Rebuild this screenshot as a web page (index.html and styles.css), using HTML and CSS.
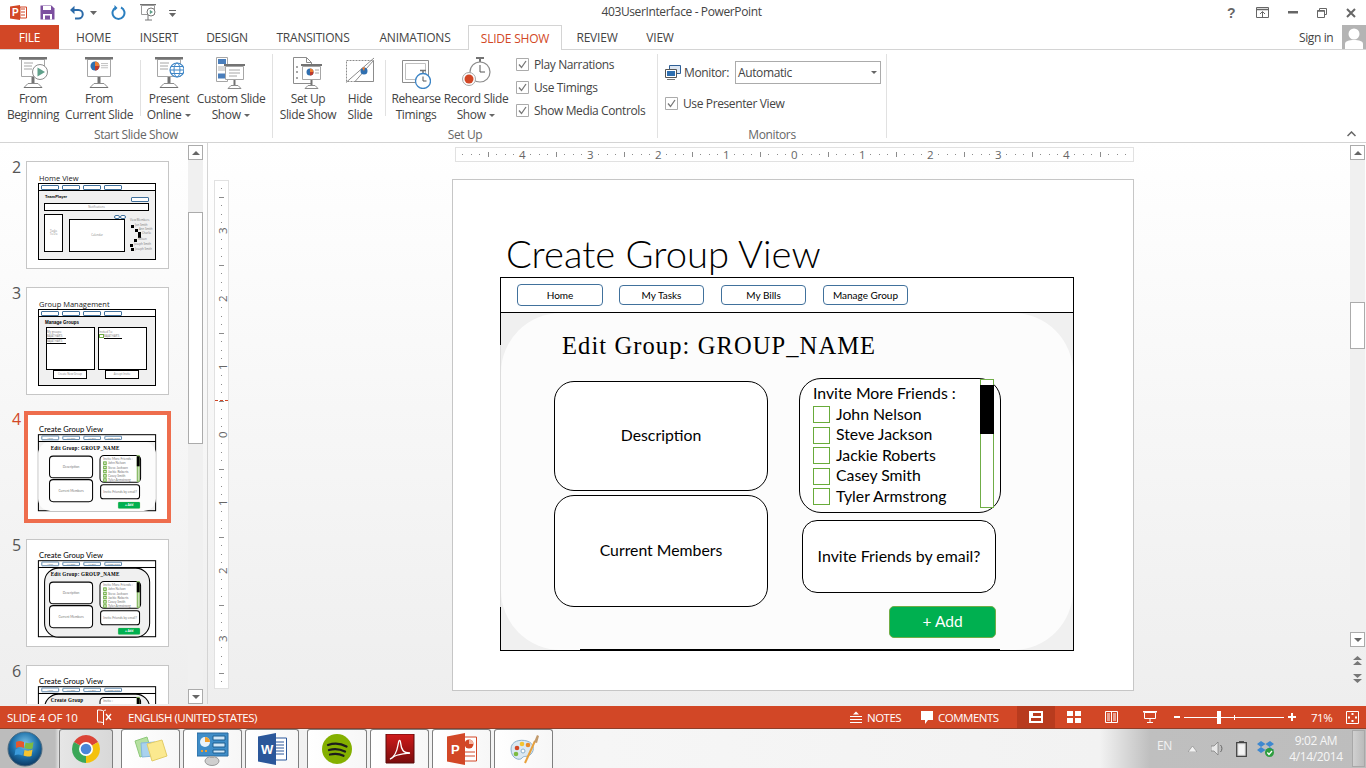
FILE: index.html
```html
<!DOCTYPE html>
<html lang="en">
<head>
<meta charset="utf-8">
<title>403UserInterface - PowerPoint</title>
<link rel="stylesheet" href="styles.css">
</head>
<body>
<svg class="defs" aria-hidden="true">
  <symbol id="proj" viewBox="0 0 30 32">
    <path d="M3.5 2.5h23v17h-23z" fill="#fff" stroke="#a6a6a6"/>
    <path d="M1 0h28v2.5H1z" fill="#737373"/>
    <path d="M13.5 20h3v6h-3z" fill="#737373"/>
    <path d="M10 26.5h10l4 4H6z" fill="#fff" stroke="#8c8c8c"/>
    <path d="M6 30.500h18" stroke="#737373"/>
  </symbol>
  <symbol id="lines" viewBox="0 0 10 10">
    <path d="M0 1.500h10M0 4.500h10M0 7.500h10" stroke="#a6a6a6"/>
  </symbol>
</svg>

<header class="titlebar">
  <div class="qat">
    <svg class="q-ppt" width="17" height="15" viewBox="0 0 17 15"><path d="M0 1.500 10 0v15L0 13.500z" fill="#d24726"/><path d="M10 2h6.500v11H10z" fill="#fff" stroke="#d24726"/><path d="M11 4h4M11 7h4M11 10h4" stroke="#d24726"/><text x="2" y="11" class="q-p">P</text></svg>
    <svg class="q-save" width="15" height="15" viewBox="0 0 15 15"><path d="M.5.500h11l3 3v11H.5z" fill="#7c4f9f"/><path d="M3 1h8v4H3z" fill="#fff"/><path d="M3 9h9v5.500H3z" fill="#fff"/><path d="M5 10.500h5v4H5z" fill="#7c4f9f"/></svg>
    <svg class="q-undo" width="15" height="15" viewBox="0 0 15 15"><path d="M2 5h7.500a4 4 0 0 1 0 8.500H6" fill="none" stroke="#2b6aa8" stroke-width="2"/><path d="M5.500.800 1 5l4.500 4.200z" fill="#2b6aa8"/></svg>
    <svg class="q-caret" width="7" height="4" viewBox="0 0 7 4"><path d="M0 0h7L3.500 4z" fill="#666"/></svg>
    <svg class="q-redo" width="15" height="15" viewBox="0 0 15 15"><path d="M5 2.500a6 6 0 1 0 5 0" fill="none" stroke="#2b7fc0" stroke-width="2"/><path d="M3.500 0v6l3-3z" fill="#2b7fc0"/></svg>
    <svg class="q-show" width="17" height="17" viewBox="0 0 17 17"><path d="M0 .500h16" stroke="#737373" stroke-width="1.500"/><path d="M1.500 1.500h13v9h-13z" fill="#fff" stroke="#999"/><circle cx="11" cy="8" r="4" fill="#fff" stroke="#777"/><path d="M9.800 5.800 13 8l-3.200 2.200z" fill="#5fa08a"/><path d="M5 16h7M8 11v5" stroke="#777"/></svg>
    <svg class="q-more" width="7" height="8" viewBox="0 0 7 8"><path d="M0 1.500h7" stroke="#666"/><path d="M0 4h7L3.500 8z" fill="#666"/></svg>
  </div>
  <div class="doc-title">403UserInterface - PowerPoint</div>
  <div class="winctl">
    <span class="help">?</span>
    <svg class="wc" width="13" height="11" viewBox="0 0 13 11"><path d="M.5.500h12v10H.5z" fill="none" stroke="#666"/><path d="M.5 2.500h12" stroke="#666" stroke-width="1.500"/><path d="M6.500 10V5M4 7l2.500-2.500L9 7" fill="none" stroke="#666"/></svg>
    <svg class="wc" width="10" height="3" viewBox="0 0 10 3"><path d="M0 0h10v2.500H0z" fill="#666"/></svg>
    <svg class="wc" width="10" height="10" viewBox="0 0 10 10"><path d="M2.500 2V.500h7v6H8" fill="none" stroke="#666"/><path d="M.5 2.500h7v7h-7z" fill="#fff" stroke="#666"/><path d="M.5 3h7" stroke="#666" stroke-width="1.500"/></svg>
    <svg class="wc" width="10" height="10" viewBox="0 0 10 10"><path d="M1 1l8 8M9 1l-8 8" stroke="#666" stroke-width="2"/></svg>
  </div>
</header>

<nav class="tabs">
  <span class="tab file">FILE</span>
  <span class="tab">HOME</span>
  <span class="tab">INSERT</span>
  <span class="tab">DESIGN</span>
  <span class="tab">TRANSITIONS</span>
  <span class="tab">ANIMATIONS</span>
  <span class="tab active">SLIDE SHOW</span>
  <span class="tab">REVIEW</span>
  <span class="tab">VIEW</span>
  <span class="signin">Sign in</span>
  <svg class="avatar" width="24" height="24" viewBox="0 0 24 24"><path d="M0 0h24v24H0z" fill="#b4b4b4"/><circle cx="12" cy="9" r="5.500" fill="#fff"/><path d="M3 24v-5c0-3 4-4 9-4s9 1 9 4v5z" fill="#fff"/></svg>
</nav>

<section class="ribbon">
  <div class="group g-start">
    <div class="group-body">
      <div class="rbtn w66">
        <svg class="ic" width="30" height="32" viewBox="0 0 30 32"><use href="#proj"/><path d="M6 6h9M6 9h8M6 12h8" stroke="#a6a6a6"/><circle cx="22" cy="15" r="7.500" fill="#fff" stroke="#8c8c8c"/><path d="M19.500 10.500 27 15l-7.500 4.500z" fill="#5fa08a"/></svg>
        <span>From<br>Beginning</span>
      </div>
      <div class="rbtn w66">
        <svg class="ic" width="30" height="32" viewBox="0 0 30 32"><use href="#proj"/><circle cx="11" cy="9" r="4.500" fill="#2f6fb0"/><path d="M11 9V4.500A4.500 4.500 0 0 1 15.500 9z" fill="#ed7d31"/><path d="M11 9h4.500A4.500 4.500 0 0 1 11 13.500z" fill="#c0392b"/><use href="#lines" x="17" y="5" width="7" height="8"/></svg>
        <span>From<br>Current Slide</span>
      </div>
      <i class="sep s-a"></i>
      <div class="rbtn w52">
        <svg class="ic" width="30" height="32" viewBox="0 0 30 32"><use href="#proj"/><path d="M6 6h9M6 9h8M6 12h8" stroke="#a6a6a6"/><circle cx="23" cy="13" r="7" fill="#fff" stroke="#3d85c6" stroke-width="1.200"/><ellipse cx="23" cy="13" rx="3" ry="7" fill="none" stroke="#3d85c6"/><path d="M16 13h14M17 9.500h12M17 16.500h12" stroke="#3d85c6"/></svg>
        <span>Present<br>Online <b class="car"></b></span>
      </div>
      <div class="rbtn w72">
        <svg class="ic" width="30" height="32" viewBox="0 0 30 32"><path d="M.5.500h11v24H.5z" fill="#fff" stroke="#a6a6a6"/><path d="M2 2h8v5H2zM2 16.500h8v5H2z" fill="#4a7ebb"/><path d="M2 9h8v5H2z" fill="#d9d9d9"/><path d="M9.500 9.500h18v13h-18z" fill="#fff" stroke="#a6a6a6"/><path d="M8 7h21v2H8z" fill="#737373"/><path d="M13 13h11M13 16h11M13 19h8" stroke="#a6a6a6"/><path d="M17.500 23h2v5h-2z" fill="#737373"/><path d="M15 28.500h7l3 3H12z" fill="#fff" stroke="#8c8c8c"/></svg>
        <span>Custom Slide<br>Show <b class="car"></b></span>
      </div>
    </div>
    <div class="group-label">Start Slide Show</div>
  </div>

  <div class="group g-setup">
    <div class="group-body">
      <div class="rbtn w66 ml2">
        <svg class="ic" width="30" height="32" viewBox="0 0 30 32"><path d="M.5.500h13l5 5v21H.5z" fill="#fff" stroke="#8c8c8c"/><path d="M13.500.500v5h5" fill="none" stroke="#8c8c8c"/><path d="M3 9h2v2H3zM3 14h2v2H3zM3 20h2v2H3z" fill="#a6a6a6"/><path d="M9.500 9.500h18v13h-18z" fill="#fff" stroke="#a6a6a6"/><path d="M8 7h21v2H8z" fill="#737373"/><circle cx="17" cy="15" r="3.500" fill="#2f6fb0"/><path d="M17 15v-3.500a3.500 3.500 0 0 1 3.500 3.500z" fill="#ed7d31"/><path d="M17 15h3.500a3.500 3.500 0 0 1-3.500 3.500z" fill="#c0392b"/><path d="M22 13h4M22 16h4" stroke="#a6a6a6"/><path d="M17.500 23h2v5h-2z" fill="#737373"/><path d="M15 28.500h7l3 3H12z" fill="#fff" stroke="#8c8c8c"/></svg>
        <span>Set Up<br>Slide Show</span>
      </div>
      <div class="rbtn w38">
        <svg class="ic" width="30" height="32" viewBox="0 0 30 32"><path d="M1.500 3.500h27v21h-27z" fill="#fff" stroke="#8c8c8c" stroke-dasharray="2 1"/><path d="M10 24.500 28.500 3.500v21z" fill="#fff" stroke="#8c8c8c"/><path d="M1 25.500 29 1" stroke="#8c8c8c"/><circle cx="19" cy="14" r="3.500" fill="#2f6fb0"/><path d="M19 14l-2-3a3.500 3.500 0 0 1 3-.5z" fill="#ed7d31"/></svg>
        <span>Hide<br>Slide</span>
      </div>
      <i class="sep s-b"></i>
      <div class="rbtn w52">
        <svg class="ic" width="30" height="32" viewBox="0 0 30 32"><path d="M1.500 3.500h26v22h-26z" fill="#fff" stroke="#8c8c8c"/><path d="M4.500 6.500h20v16h-20z" fill="#fff" stroke="#bfbfbf"/><path d="M19 13.500h6M22 13.500v3" stroke="#737373" stroke-width="1.500"/><circle cx="22" cy="24" r="7.500" fill="#fff" stroke="#3d85c6" stroke-width="1.300"/><path d="M22 19.500V24h3.500" fill="none" stroke="#555"/></svg>
        <span>Rehearse<br>Timings</span>
      </div>
      <div class="rbtn w64 ml2">
        <svg class="ic" width="30" height="32" viewBox="0 0 30 32"><path d="M15 1h8M19 1v4" stroke="#737373" stroke-width="2"/><circle cx="19" cy="15" r="10" fill="#fff" stroke="#8c8c8c" stroke-width="1.200"/><path d="M19 8v7h5" fill="none" stroke="#555"/><circle cx="8" cy="22" r="6.500" fill="#fff" stroke="#a6a6a6"/><circle cx="8" cy="22" r="4.500" fill="#d24726"/></svg>
        <span>Record Slide<br>Show <b class="car"></b></span>
      </div>
      <div class="checks">
        <label class="chk"><svg class="box" width="13" height="13" viewBox="0 0 13 13"><path d="M.5.500h12v12H.5z" fill="#fff" stroke="#ababab"/><path d="M3 6.500l2.500 3L10 3" fill="none" stroke="#777" stroke-width="1.300"/></svg>Play Narrations</label>
        <label class="chk"><svg class="box" width="13" height="13" viewBox="0 0 13 13"><path d="M.5.500h12v12H.5z" fill="#fff" stroke="#ababab"/><path d="M3 6.500l2.500 3L10 3" fill="none" stroke="#777" stroke-width="1.300"/></svg>Use Timings</label>
        <label class="chk"><svg class="box" width="13" height="13" viewBox="0 0 13 13"><path d="M.5.500h12v12H.5z" fill="#fff" stroke="#ababab"/><path d="M3 6.500l2.500 3L10 3" fill="none" stroke="#777" stroke-width="1.300"/></svg>Show Media Controls</label>
      </div>
    </div>
    <div class="group-label">Set Up</div>
  </div>

  <div class="group g-mon">
    <div class="group-body col">
      <div class="mon-row">
        <svg class="mon-ic" width="16" height="15" viewBox="0 0 16 15"><path d="M4.500.500h11v8h-11z" fill="#dce6f2" stroke="#2f5f96"/><path d="M.5 4.500h11v8h-11z" fill="#fff" stroke="#555"/><path d="M2 6h8v5H2z" fill="#2f6fb0"/><path d="M2 14.500h8" stroke="#777"/></svg>
        <span class="mon-l">Monitor:</span>
        <div class="select">Automatic<b class="car sel-car"></b></div>
      </div>
      <label class="chk presenter"><svg class="box" width="13" height="13" viewBox="0 0 13 13"><path d="M.5.500h12v12H.5z" fill="#fff" stroke="#ababab"/><path d="M3 6.500l2.500 3L10 3" fill="none" stroke="#777" stroke-width="1.300"/></svg>Use Presenter View</label>
    </div>
    <div class="group-label">Monitors</div>
  </div>
  <svg class="collapse" width="9" height="6" viewBox="0 0 9 6"><path d="M.5 5 4.500 1l4 4" fill="none" stroke="#666" stroke-width="1.500"/></svg>
</section>

<main class="main">
  <aside class="pane">
    <div class="thumbs">
      <div class="trow">
        <span class="tnum">2</span>
        <div class="thumb">
          <span class="tt">Home View</span>
          <div class="tw"></div>
          <div class="tline t1"></div>
          <i class="tb b1"></i><i class="tb b2"></i><i class="tb b3"></i><i class="tb b4"></i>
          <b class="th1 hv">TeamPlayer</b>
          <i class="tb hv-btn"></i>
          <div class="tbox hv-bar">Notifications</div>
          <div class="tbox hv-left">Tasks To Do</div>
          <div class="tbox hv-mid">Calendar</div>
          <i class="tb hv-r1"></i><i class="tb hv-r2"></i>
          <span class="tiny hv-list">View Members</span>
          <i class="sq q1"></i><i class="sq q2"></i><i class="sq q3"></i><i class="sq q4"></i><i class="sq q5"></i><i class="sq q6"></i>
          <span class="tiny l1">Jon Smith</span><span class="tiny l2">Ann Smith</span><span class="tiny l3">Charlie</span><span class="tiny l4">Wilson</span><span class="tiny l5">Joseph Smith</span><span class="tiny l6">Joseph Smith</span>
        </div>
      </div>
      <div class="trow">
        <span class="tnum">3</span>
        <div class="thumb">
          <span class="tt">Group Management</span>
          <div class="tw"></div>
          <div class="tline t1"></div>
          <i class="tb b1"></i><i class="tb b2"></i><i class="tb b3"></i><i class="tb b4"></i>
          <b class="th1 mg">Manage Groups</b>
          <div class="tbox mg-a"></div>
          <div class="tbox mg-b"></div>
          <div class="tbox mg-c">Create New Group</div>
          <div class="tbox mg-d">Accept Invite</div>
          <span class="tiny m1">My groups:</span>
          <span class="tiny m2 ul">BAJATHAR'S</span>
          <span class="tiny m3 ul">BAJATHAR'S</span>
          <span class="tiny m4">Invited To:</span>
          <span class="tiny m5 ul">BAJATHAR'S</span>
          <i class="gsq"></i>
        </div>
      </div>
      <div class="trow">
        <span class="tnum sel-num">4</span>
        <div class="thumb sel">
          <div class="mini">
            <h2 class="s-title">Create Group View</h2>
            <div class="wire"></div>
            <div class="panel"></div>
            <div class="navline"></div>
            <div class="nbtn n1">Home</div><div class="nbtn n2">My Tasks</div><div class="nbtn n3">My Bills</div><div class="nbtn n4">Manage Group</div>
            <h3 class="s-head">Edit Group: GROUP_NAME</h3>
            <div class="card c-desc">Description</div>
            <div class="card c-memb">Current Members</div>
            <div class="card c-inv">
              <div class="inv-h">Invite More Friends :</div>
              <div class="fr"><i></i>John Nelson</div><div class="fr"><i></i>Steve Jackson</div><div class="fr"><i></i>Jackie Roberts</div><div class="fr"><i></i>Casey Smith</div><div class="fr"><i></i>Tyler Armstrong</div>
            </div>
            <div class="sb"><i></i></div>
            <div class="card c-mail">Invite Friends by email?</div>
            <div class="add">+ Add</div>
          </div>
        </div>
      </div>
      <div class="trow">
        <span class="tnum">5</span>
        <div class="thumb">
          <div class="mini">
            <h2 class="s-title">Create Group View</h2>
            <div class="wire plain"></div>
            <div class="panel framed"></div>
            <div class="navline"></div>
            <div class="nbtn n1">Home</div><div class="nbtn n2">My Tasks</div><div class="nbtn n3">My Bills</div><div class="nbtn n4">Manage Group</div>
            <h3 class="s-head">Edit Group: GROUP_NAME</h3>
            <div class="card c-desc">Description</div>
            <div class="card c-memb">Current Members</div>
            <div class="card c-inv">
              <div class="inv-h">Invite More Friends :</div>
              <div class="fr"><i></i>John Nelson</div><div class="fr"><i></i>Steve Jackson</div><div class="fr"><i></i>Jackie Roberts</div><div class="fr"><i></i>Casey Smith</div><div class="fr"><i></i>Tyler Armstrong</div>
            </div>
            <div class="sb"><i></i></div>
            <div class="card c-mail">Invite Friends by email?</div>
            <div class="add">+ Add</div>
          </div>
        </div>
      </div>
      <div class="trow">
        <span class="tnum">6</span>
        <div class="thumb">
          <div class="mini">
            <h2 class="s-title">Create Group View</h2>
            <div class="wire plain"></div>
            <div class="panel framed"></div>
            <div class="navline"></div>
            <div class="nbtn n1">Home</div><div class="nbtn n2">My Tasks</div><div class="nbtn n3">My Bills</div><div class="nbtn n4">Manage Group</div>
            <h3 class="s-head">Create Group</h3>
            <div class="card c-inv c-up"><div class="inv-h">Invite :</div></div>
            <div class="sb sb-up"><i></i></div>
          </div>
        </div>
      </div>
    </div>
    <div class="vscroll left">
      <span class="sbtn"><b class="tri up"></b></span>
      <div class="track"><div class="sthumb"></div></div>
      <span class="sbtn"><b class="tri down"></b></span>
    </div>
  </aside>

  <section class="editor">
    <div class="vruler">
      <svg class="r-ticks" width="13" height="507"><defs><pattern id="pv" x="0" y="50" width="13" height="68" patternUnits="userSpaceOnUse"><path d="M6 8h1v1H6zM6 17h1v1H6zM6 25h1v1H6zM4 34h5v1H4zM6 42h1v1H6zM6 51h1v1H6zM6 59h1v1H6z" fill="#8c8c8c"/></pattern></defs><rect width="13" height="507" fill="url(#pv)"/></svg>
      <div class="v-nums"><span>3</span><span>2</span><span>1</span><span>0</span><span>1</span><span>2</span><span>3</span></div>
      <i class="v-mark"></i>
    </div>
    <div class="stage">
      <div class="hruler">
        <svg class="r-ticks" width="677" height="13"><defs><pattern id="ph" x="66" y="0" width="68" height="13" patternUnits="userSpaceOnUse"><path d="M8 6h1v1H8zM17 6h1v1h-1zM25 6h1v1h-1zM34 4h1v5h-1zM42 6h1v1h-1zM51 6h1v1h-1zM59 6h1v1h-1z" fill="#8c8c8c"/></pattern></defs><rect width="677" height="13" fill="url(#ph)"/></svg>
        <div class="h-nums"><span>4</span><span>3</span><span>2</span><span>1</span><span>0</span><span>1</span><span>2</span><span>3</span><span>4</span></div>
      </div>
      <div class="slide">
        <h2 class="s-title">Create Group View</h2>
        <div class="wire"></div>
        <div class="panel"></div>
        <div class="navline"></div>
        <i class="fade-left"></i>
        <i class="thick"></i>
        <div class="nbtn n1">Home</div><div class="nbtn n2">My Tasks</div><div class="nbtn n3">My Bills</div><div class="nbtn n4">Manage Group</div>
        <h3 class="s-head">Edit Group: GROUP_NAME</h3>
        <div class="card c-desc">Description</div>
        <div class="card c-memb">Current Members</div>
        <div class="card c-inv">
          <div class="inv-h">Invite More Friends :</div>
          <div class="fr"><i></i>John Nelson</div><div class="fr"><i></i>Steve Jackson</div><div class="fr"><i></i>Jackie Roberts</div><div class="fr"><i></i>Casey Smith</div><div class="fr"><i></i>Tyler Armstrong</div>
        </div>
        <div class="sb"><i></i></div>
        <div class="card c-mail">Invite Friends by email?</div>
        <div class="add">+ Add</div>
      </div>
    </div>
    <div class="vscroll right">
      <span class="sbtn"><b class="tri up"></b></span>
      <div class="track"><div class="sthumb"></div></div>
      <span class="sbtn"><b class="tri down"></b></span>
      <svg class="pg" width="9" height="9" viewBox="0 0 9 9"><path d="M0 4 4.500 0 9 4zM0 9l4.500-4L9 9z" fill="#777"/></svg>
      <svg class="pg" width="9" height="9" viewBox="0 0 9 9"><path d="M0 0l4.500 4L9 0zM0 5l4.500 4L9 5z" fill="#777"/></svg>
    </div>
  </section>
</main>

<footer class="status">
  <span class="st-slide">SLIDE 4 OF 10</span>
  <svg class="st-book" width="15" height="16" viewBox="0 0 15 16"><path d="M6.500 2C5 1 3 1 .5 1v12c2.500 0 4.500 0 6 1V2z" fill="none" stroke="#fff"/><path d="M6.500 2c1-.7 1.500-.9 2.500-1M6.500 14v2" stroke="#fff"/><path d="M9 5l5 6M14 5l-5 6" stroke="#fff" stroke-width="1.300"/></svg>
  <span class="st-lang">ENGLISH (UNITED STATES)</span>
  <div class="st-right">
    <svg class="si-notes" width="12" height="12" viewBox="0 0 12 12"><path d="M3 3.500 6 .500l3 3z" fill="#fff"/><path d="M0 5.500h12M0 8.500h12M0 11.500h12" stroke="#fff"/></svg>
    <span class="st-notes">NOTES</span>
    <svg class="si-com" width="12" height="13" viewBox="0 0 12 13"><path d="M0 0h12v9H7l-3 4V9H0z" fill="#fff"/></svg>
    <span class="st-comments">COMMENTS</span>
    <span class="view-on"><svg width="14" height="12" viewBox="0 0 14 12"><path d="M0 0h14v12H0z" fill="#fff"/><path d="M4 2h8v3H4zM2 7h10v3H2z" fill="#b83b1e"/></svg></span>
    <svg class="si-sort" width="14" height="12" viewBox="0 0 14 12"><path d="M0 0h6v5H0zM8 0h6v5H8zM0 7h6v5H0zM8 7h6v5H8z" fill="#fff"/></svg>
    <svg class="si-read" width="13" height="12" viewBox="0 0 13 12"><path d="M.5.500h12v11H.5z" fill="none" stroke="#fff"/><path d="M6.500 0v12M2 3h3M2 5h3M2 7h3M2 9h3M8 3h3M8 5h3M8 7h3M8 9h3" stroke="#fff"/></svg>
    <svg class="si-show" width="14" height="12" viewBox="0 0 14 12"><path d="M0 0h14v1.500H0z" fill="#fff"/><path d="M1.500 1.500h11v6h-11z" fill="none" stroke="#fff"/><path d="M7 8v3M4 11.500h6" stroke="#fff"/></svg>
    <b class="z-m"></b>
    <div class="slider"><i class="z-tick"></i><i class="z-th"></i></div>
    <b class="z-p"></b>
    <span class="st-zoom">71%</span>
    <svg class="si-fit" width="13" height="13" viewBox="0 0 13 13"><path d="M.5.500h12v12H.5z" fill="none" stroke="#fff"/><path d="M6.500 2v2M6.500 9v2M2 6.500h2M9 6.500h2M5 3h3M5 10h3M3 5v3M10 5v3" stroke="#fff"/></svg>
  </div>
</footer>

<div class="taskbar">
  <div class="start">
    <svg width="36" height="36" viewBox="0 0 36 36"><defs><radialGradient id="orb" cx=".5" cy=".35" r=".7"><stop offset="0" stop-color="#7cc4e8"/><stop offset=".55" stop-color="#1a6ea8"/><stop offset="1" stop-color="#0c2f55"/></radialGradient></defs><circle cx="18" cy="18" r="17" fill="url(#orb)" stroke="#4d6b80"/><path d="M9 11c3-1.500 5-1 8 0v6c-3-1-5-1.500-8 0z" fill="#e4572e"/><path d="M18.500 11.500c3 1 5 1 8-.5l-1 6.500c-3 1-5 .5-8-.5z" fill="#7dbb42"/><path d="M8.500 18.500c3-1.500 5-1 8 0l-1 6c-3-1-5-1.500-8 0z" fill="#3b9bdc"/><path d="M17.500 19c3 1 5 1 8-.5l-1 6.500c-3 1-5 .5-8-.5z" fill="#f4c430"/></svg>
  </div>
  <div class="tk w54 pressed">
    <svg width="28" height="28" viewBox="0 0 28 28"><path d="M1.900 7A14 14 0 0 1 26.100 7L14 14z" fill="#db4437"/><path d="M26.100 7A14 14 0 0 1 14 28L14 14z" fill="#f4c20d"/><path d="M14 28A14 14 0 0 1 1.900 7L14 14z" fill="#3aa757"/><circle cx="14" cy="14" r="7" fill="#fff"/><circle cx="14" cy="14" r="5.300" fill="#4a86d8"/></svg>
  </div>
  <div class="tk w59 gap8">
    <svg width="34" height="28" viewBox="0 0 34 28"><path d="M1 6 13 2l5 16-12 4z" fill="#b5e0a0" stroke="#8ec97a"/><path d="M7 8l14-1v14L8 22z" fill="#a9d2ee" stroke="#86b8dc"/><path d="M13 9l15-4 5 16-15 5z" fill="#fbe98f" stroke="#e3cc66"/></svg>
  </div>
  <div class="tk w59">
    <svg width="32" height="34" viewBox="0 0 32 34"><path d="M0 1h31v23H0z" fill="#3f8dc8" stroke="#2a6a9e"/><path d="M16 4h12v4H16zM16 11h12v4H16zM16 18h12v3H16z" fill="#cfe6f7" stroke="#1f5f90"/><circle cx="8" cy="10" r="5" fill="#e9f3fa"/><path d="M8 10V5a5 5 0 0 1 5 5z" fill="#f0a030"/><path d="M4 18h2v2H4zM8 18h2v2H8z" fill="#f0a030"/><ellipse cx="15" cy="29" rx="7" ry="4.500" fill="#cfcfcf" stroke="#999"/><path d="M13 24h4v2h-4z" fill="#aaa"/></svg>
  </div>
  <div class="tk w54">
    <svg width="29" height="32" viewBox="0 0 29 32"><path d="M10 5h18.500v22H10z" fill="#fff" stroke="#2b579a"/><path d="M17 9h9M17 12h9M17 15h9M17 18h9M17 21h9" stroke="#2b579a"/><path d="M0 3.500 18 0v32L0 28.500z" fill="#2b579a"/><text x="3" y="21" class="tk-l">W</text></svg>
  </div>
  <div class="tk w60 gap8">
    <svg width="30" height="30" viewBox="0 0 30 30"><circle cx="15" cy="15" r="15" fill="#84b000"/><path d="M6 11c6-2 13-1.500 18.500 1.500M7 16c5-1.500 11-1 16 1.500M8 20.500c4.500-1 9.500-.8 13.500 1.300" fill="none" stroke="#1d1d1d" stroke-width="2.300" stroke-linecap="round"/></svg>
  </div>
  <div class="tk w59">
    <svg width="30" height="30" viewBox="0 0 30 30"><defs><linearGradient id="acro" x1="0" y1="0" x2="0" y2="1"><stop offset="0" stop-color="#d01a1a"/><stop offset="1" stop-color="#7a0d0d"/></linearGradient></defs><path d="M1 0h28v29H1z" fill="url(#acro)" stroke="#5a0b0b"/><path d="M5 25c4-2 7-8 8-14 .5-3 1-5 2-4.500s0 6 3 10c1.500 2 5 2.500 7 2.500-3 .5-11 1-15 3-2 1-4 3-5 3z" fill="none" stroke="#fff" stroke-width="1.300"/></svg>
  </div>
  <div class="tk w59">
    <svg width="30" height="32" viewBox="0 0 30 32"><path d="M10 4h19.500v24H10z" fill="#fff" stroke="#d24726"/><circle cx="22" cy="11" r="4.500" fill="#d24726"/><path d="M22 11V6.500a4.500 4.500 0 0 1 4.500 4.500z" fill="#f5b39f"/><path d="M18 19h10M18 23h10" stroke="#d24726"/><path d="M0 3.500 18 0v32L0 28.500z" fill="#d24726"/><text x="4" y="21" class="tk-l">P</text></svg>
  </div>
  <div class="tk w59">
    <svg width="32" height="32" viewBox="0 0 32 32"><path d="M3 16C3 8 12 6 19 8s8 9 4 13-7 1-9 4-11 1-11-9z" fill="#dbe8f2" stroke="#8cb0cc"/><circle cx="9" cy="15" r="2.300" fill="#d24726"/><circle cx="14" cy="11" r="2.300" fill="#f4c430"/><circle cx="20" cy="12" r="2.300" fill="#e88a2a"/><circle cx="8" cy="21" r="2.300" fill="#7dbb42"/><circle cx="15" cy="18" r="2" fill="#fff" stroke="#8cb0cc"/><path d="M17 30 27 8" stroke="#e8a13c" stroke-width="2"/><path d="M26 9l3-7 2 1-2 7z" fill="#c29a6b"/></svg>
  </div>
  <div class="tray">
    <span class="tr-en">EN</span>
    <svg class="tr-up" width="9" height="6" viewBox="0 0 9 6"><path d="M0 6 4.500 0 9 6z" fill="#f2f2f2" stroke="#777" stroke-width=".5"/></svg>
    <svg class="tr-sp" width="13" height="15" viewBox="0 0 13 15"><path d="M0 5h3l4-4v13l-4-4H0z" fill="#e8e8e8" stroke="#777" stroke-width=".7"/><path d="M9.500 4a5 5 0 0 1 0 7" fill="none" stroke="#666"/></svg>
    <svg class="tr-bat" width="11" height="16" viewBox="0 0 11 16"><path d="M3 0h5v2H3z" fill="#555"/><path d="M.7 1.700h9.600v13.600H.7z" fill="#ddd" stroke="#444" stroke-width="1.300"/><path d="M2.500 3.500h6v10h-6z" fill="#f4f4f4"/></svg>
    <svg class="tr-db" width="17" height="17" viewBox="0 0 17 17"><path d="M4 1 8.500 4 4 7 0 4zM13 1l4 3-4.500 3-4-3zM4 7l4.500 3L4 13 0 10zM13 7l4 3-4.500 3-4-3z" fill="#3d88d0"/><circle cx="12.500" cy="12.500" r="4.500" fill="#2e9e3f"/><path d="M10.300 12.500l1.700 2 3-3.500" fill="none" stroke="#fff" stroke-width="1.300"/></svg>
    <div class="clock"><span>9:02 AM</span><span>4/14/2014</span></div>
    <i class="desk"></i>
  </div>
</div>
</body>
</html>
```

FILE: styles.css
```css
* { box-sizing: border-box; }
html, body { margin: 0; padding: 0; }
body {
  width: 1366px; height: 768px; overflow: hidden; background: #fff;
  font-family: "Open Sans", "Noto Sans", sans-serif; font-size: 12px; color: #444;
  letter-spacing: -.38px; display: flex; flex-direction: column;
}
.defs { position: absolute; width: 0; height: 0; }
svg { display: block; flex: none; }

/* title bar */
.titlebar { height: 25px; display: flex; align-items: center; position: relative; flex: none; }
.qat { display: flex; align-items: center; padding-left: 10px; }
.q-p { font: bold 10px "Liberation Sans", sans-serif; fill: #fff; }
.q-save { margin-left: 13px; }
.q-undo { margin-left: 14px; }
.q-caret { margin-left: 6px; }
.q-redo { margin-left: 14px; }
.q-show { margin-left: 14px; }
.q-more { margin-left: 12px; }
.doc-title { position: absolute; left: 0; width: 1363px; text-align: center; top: 3px; line-height: 18px; pointer-events: none; }
.winctl { margin-left: auto; display: flex; align-items: center; padding-right: 10px; }
.help { width: 12px; font: bold 14px "Liberation Sans", sans-serif; color: #666; text-align: center; }
.wc { margin-left: 19px; }

/* tabs */
.tabs {
  height: 25px; flex: none; display: grid; align-items: stretch; border-bottom: 1px solid #d4d4d4;
  grid-template-columns: 59px 69px 62px 74px 98px 106px 94px 70px 56px 1fr 36px 7px 24px;
}
.tab { display: flex; align-items: center; justify-content: center; height: 24px; letter-spacing: -.22px; }
.tab.file { background: #d24726; color: #fff; }
.tab.active { color: #d24726; background: #fff; height: 25px; border: 1px solid #d4d4d4; border-bottom: 0; }
.signin { grid-column: 11; display: flex; align-items: center; white-space: nowrap; height: 24px; }
.avatar { grid-column: 13; height: 24px; }

/* ribbon */
.ribbon { height: 93px; flex: none; display: flex; border-bottom: 1px solid #d4d4d4; padding-top: 4px; position: relative; }
.group { height: 84px; display: flex; flex-direction: column; border-right: 1px solid #e1e1e1; }
.g-start { width: 273px; }
.g-setup { width: 385px; }
.g-mon { width: 229px; }
.group-body { flex: 1; display: flex; min-height: 0; }
.group-body.col { flex-direction: column; padding-left: 7px; }
.group-label { height: 16px; margin-bottom: -5px; line-height: 16px; text-align: center; color: #666; white-space: nowrap; }
.rbtn { display: flex; flex-direction: column; align-items: center; padding-top: 3px; line-height: 16px; text-align: center; white-space: nowrap; }
.rbtn .ic { margin-bottom: 2px; }
.w66 { width: 66px; } .w52 { width: 52px; } .w72 { width: 72px; } .w38 { width: 38px; } .w64 { width: 64px; }
.ml2 { margin-left: 2px; }
.sep { width: 1px; height: 56px; background: #e1e1e1; margin-top: 6px; flex: none; }
.s-a { margin: 6px 2px 0 8px; }
.s-b { margin: 6px 4px 0 6px; }
.car { display: inline-block; width: 0; height: 0; border: 3px solid transparent; border-top: 3px solid #666; border-bottom: 0; vertical-align: middle; margin-left: 1px; }
.checks { margin-left: 8px; margin-top: -1px; display: flex; flex-direction: column; gap: 1px; }
.chk { height: 22px; display: flex; align-items: center; gap: 5px; white-space: nowrap; }
.mon-row { display: flex; align-items: center; margin-top: 7px; height: 23px; }
.mon-l { margin-left: 3px; width: 51px; }
.select { width: 146px; height: 23px; border: 1px solid #ababab; padding-left: 2px; line-height: 21px; position: relative; }
.sel-car { position: absolute; right: 3px; top: 9px; }
.presenter { margin-top: 8px; }
.collapse { position: absolute; left: 1347px; top: 81px; }

/* main */
.main { height: 563px; flex: none; display: flex; background: linear-gradient(#fff, #eee); overflow: hidden; }
.pane { width: 208px; height: 561px; display: flex; border-right: 1px solid #d4d4d4; flex: none; }
.thumbs { width: 188px; padding-top: 18px; overflow: hidden; height: 561px; }
.trow { display: flex; margin-bottom: 18px; height: 108px; }
.tnum { width: 26px; padding-left: 12px; font-size: 16px; line-height: 12px; color: #555; }
.sel-num { color: #d24726; }
.thumb { width: 143px; height: 108px; position: relative; background: #fff; box-shadow: inset 0 0 0 1px #c6c6c6; overflow: visible; letter-spacing: 0; }
.thumb.sel { box-shadow: 0 0 0 2px #ee6d4d, inset 0 0 0 2px #ee6d4d; }

.vscroll { width: 15px; display: flex; flex-direction: column; flex: none; align-items: center; }
.left.vscroll { margin-top: 2px; height: 559px; }
.right.vscroll { margin: 2px 0 0 216px; height: 559px; }
.sbtn { width: 15px; height: 15px; border: 1px solid #ababab; background: #fff; display: flex; align-items: center; justify-content: center; flex: none; }
.tri { width: 0; height: 0; border: 4px solid transparent; }
.tri.up { border-top: 0; border-bottom: 4px solid #666; }
.tri.down { border-bottom: 0; border-top: 4px solid #666; }
.track { flex: 1; width: 15px; background: #f0f0f0; }
.sthumb { width: 15px; background: #fff; border: 1px solid #ababab; }
.left .sthumb { height: 232px; margin-top: 52px; }
.right .track { flex: none; height: 472px; }
.right .sthumb { height: 47px; margin-top: 142px; }
.pg { margin-top: 9px; }

/* editor */
.editor { flex: 1; display: flex; align-items: flex-start; }
.vruler { width: 15px; height: 509px; margin: 37px 0 0 6px; border: 1px solid #e1e1e1; background: #fff; position: relative; flex: none; }
.r-ticks { position: absolute; left: 0; top: 0; }
.v-nums { position: absolute; left: 0; top: 16px; width: 13px; }
.v-nums span { display: flex; height: 68px; align-items: center; justify-content: center; transform: rotate(-90deg); font-size: 11.500px; color: #666; }
.v-mark { position: absolute; left: 0; top: 219px; width: 13px; border-top: 1px dashed #d24726; }
.stage { width: 682px; margin-left: 223px; flex: none; }
.hruler { width: 679px; height: 15px; margin: 4px 0 0 3px; border: 1px solid #e1e1e1; background: #fff; position: relative; }
.h-nums { position: absolute; left: 32px; top: 0; display: flex; }
.h-nums span { width: 68px; height: 13px; line-height: 13px; text-align: center; font-size: 11.500px; color: #666; }

/* slide canvas */
.slide { width: 682px; height: 512px; margin-top: 17px; background: #fff; position: relative; box-shadow: inset 0 0 0 1px #c6c6c6; letter-spacing: 0; }
.mini { position: absolute; left: 0; top: 0; width: 682px; height: 512px; transform-origin: 0 0; transform: translate(2px, 1px) scale(.206); }
.s-title { position: absolute; left: 54px; top: 48px; margin: 0; font: 300 38.200px/52px Lato, sans-serif; color: #000; white-space: nowrap; }
.wire { position: absolute; left: 48px; top: 98px; width: 574px; height: 374px; border: 1px solid #000; background: linear-gradient(#fff 34px, #f0f0f0 34px); }
.panel { position: absolute; left: 49px; top: 134px; width: 572px; height: 337px; border-radius: 60px; background: #fcfcfc; }
.navline { position: absolute; left: 49px; top: 133px; width: 572px; height: 1px; background: #000; }
.fade-left { position: absolute; left: 48px; top: 166px; width: 1px; height: 262px; background: #ddd; }
.thick { position: absolute; left: 128px; top: 470px; width: 420px; height: 2px; background: #000; }
.nbtn { position: absolute; height: 20px; top: 106px; width: 85px; border: 1px solid #41719c; border-radius: 4px; background: #fff; font: 10px/18px Lato, sans-serif; color: #000; text-align: center; }
.n1 { left: 65px; top: 105px; width: 86px; height: 22px; line-height: 20px; }
.n2 { left: 167px; }
.n3 { left: 269px; }
.n4 { left: 371px; }
.s-head { position: absolute; left: 110px; top: 150px; margin: 0; font: 400 24.500px/34px "Liberation Serif", serif; color: #000; white-space: nowrap; letter-spacing: 1.1px; }
.card { position: absolute; border: 1px solid #000; background: #fff; border-radius: 20px; display: flex; align-items: center; justify-content: center; padding-bottom: 2px; font: 15.800px/20px Lato, sans-serif; color: #000; white-space: nowrap; }
.c-desc { left: 102px; top: 202px; width: 214px; height: 110px; }
.c-memb { left: 102px; top: 316px; width: 214px; height: 112px; }
.c-inv { left: 347px; top: 199px; width: 202px; height: 135px; display: block; padding: 4px 0 0 13px; border-radius: 22px; }
.inv-h { height: 20px; line-height: 20px; }
.fr { display: flex; align-items: center; height: 21px; }
.fr:nth-child(odd) { height: 20px; }
.fr i { width: 17px; height: 17px; border: 1px solid #68ab3a; margin: 2px 6px 0 0; flex: none; }
.sb { position: absolute; left: 528px; top: 200px; width: 14px; height: 129px; border: 1px solid #70ad47; background: #fff; }
.sb i { display: block; height: 49px; margin: 5px -1px 0; background: #000; }
.c-mail { left: 350px; top: 341px; width: 194px; height: 73px; border-radius: 15px; font-size: 15.900px; }
.add { position: absolute; left: 437px; top: 427px; width: 107px; height: 32px; background: #00b050; border: 1px solid #70ad47; border-radius: 5px; color: #fff; font: 15.500px/29px Lato, sans-serif; text-align: center; }

/* mini overrides */
.mini .s-title { font-weight: 400; font-size: 37px; }
.mini .wire { border-width: 5px; background: linear-gradient(#fff 30px, #f0f0f0 30px); }
.mini .wire.plain { background: #fff; }
.mini .navline { height: 5px; top: 131px; }
.mini .nbtn { border-width: 4px; line-height: 12px; color: #777; }
.mini .s-head { font-weight: 700; color: #000; }
.mini .card { border-width: 5px; color: #777; }
.mini .fr i { border-width: 5px; margin: 0 6px 0 0; }
.mini .sb { border-width: 5px; }
.mini .sb i { margin: 0 -5px; }
.mini .panel.framed { left: 78px; width: 515px; height: 340px; top: 134px; border: 5px solid #000; background: #f0f0f0; border-radius: 70px; }
.mini .add { font-weight: 700; }
.mini .c-up { top: 150px; height: 100px; }
.mini .sb-up { top: 150px; height: 100px; }

/* thumbnails 2, 3 canvas items */
.tt { position: absolute; left: 13px; top: 12px; font: 7.500px/10px "Open Sans", sans-serif; color: #222; white-space: nowrap; }
.tw { position: absolute; left: 12px; top: 22px; width: 118px; height: 77px; border: 1px solid #000; background: linear-gradient(#fff 7px, #f0f0f0 7px); }
.tline { position: absolute; left: 12px; top: 29px; width: 118px; height: 1px; background: #000; }
.tb { position: absolute; height: 5px; border: 1px solid #41719c; border-radius: 1px; background: #fff; }
.b1 { left: 15px; top: 24px; width: 18px; } .b2 { left: 36px; top: 24px; width: 18px; } .b3 { left: 57px; top: 24px; width: 18px; } .b4 { left: 78px; top: 24px; width: 18px; }
.th1 { position: absolute; font: bold 4px/5px "Liberation Sans", sans-serif; color: #000; white-space: nowrap; }
.hv { left: 19px; top: 33px; }
.mg { left: 19px; top: 33px; font-size: 4.500px; }
.tbox { position: absolute; border: 1px solid #000; background: #fff; font: 2.800px/1 "Open Sans", sans-serif; color: #888; display: flex; align-items: center; justify-content: center; text-align: center; }
.hv-btn { left: 105px; top: 36px; width: 18px; }
.hv-bar { left: 18px; top: 42px; width: 105px; height: 8px; }
.hv-left { left: 18px; top: 53px; width: 19px; height: 38px; padding: 0 3px; }
.hv-mid { left: 43px; top: 58px; width: 56px; height: 33px; }
.hv-r1 { left: 88px; top: 54px; width: 6px; height: 4px; border-radius: 2px; }
.hv-r2 { left: 94px; top: 54px; width: 6px; height: 4px; border-radius: 2px; }
.tiny { position: absolute; font: 2.800px/4px "Open Sans", sans-serif; color: #777; white-space: nowrap; }
.hv-list { left: 104px; top: 57px; }
.sq { position: absolute; width: 3px; height: 3px; background: #000; }
.q1 { left: 105px; top: 64px; } .q2 { left: 109px; top: 68px; } .q3 { left: 112px; top: 71px; height: 6px; } .q4 { left: 108px; top: 78px; } .q5 { left: 104px; top: 83px; } .q6 { left: 105px; top: 87px; }
.l1 { left: 109px; top: 62px; } .l2 { left: 113px; top: 66px; } .l3 { left: 116px; top: 70px; } .l4 { left: 112px; top: 76px; } .l5 { left: 108px; top: 81px; } .l6 { left: 109px; top: 86px; }
.mg-a { left: 20px; top: 40px; width: 49px; height: 43px; }
.mg-b { left: 72px; top: 40px; width: 49px; height: 43px; }
.mg-c { left: 27px; top: 83px; width: 34px; height: 9px; }
.mg-d { left: 79px; top: 83px; width: 34px; height: 9px; }
.m1 { left: 21px; top: 43px; } .m2 { left: 21px; top: 47px; width: 19px; } .m3 { left: 21px; top: 52px; width: 19px; }
.m4 { left: 73px; top: 43px; } .m5 { left: 78px; top: 47px; width: 18px; }
.ul { border-bottom: 1px solid #000; overflow: hidden; }
.gsq { position: absolute; left: 73px; top: 47px; width: 5px; height: 4px; border: 1px solid #70ad47; }

/* status bar */
.status { height: 22px; flex: none; margin-top: 0; background: #d24726; color: #fff; display: flex; align-items: center; font-size: 11.500px; letter-spacing: -.25px; box-shadow: 0 1px 0 #8d3f2a; position: relative; }
.st-slide { margin-left: 7px; width: 90px; white-space: nowrap; }
.st-lang { margin-left: 16px; white-space: nowrap; letter-spacing: -.5px; }
.st-right { position: absolute; left: 850px; top: 0; height: 22px; width: 516px; display: flex; align-items: center; letter-spacing: -.5px; }
.st-notes { margin-left: 5px; width: 34px; }
.si-com { margin-left: 20px; }
.st-comments { margin-left: 5px; width: 60px; }
.view-on { margin-left: 19px; width: 38px; height: 22px; background: #b83b1e; display: flex; align-items: center; justify-content: center; }
.si-sort { margin-left: 12px; }
.si-read { margin-left: 24px; }
.si-show { margin-left: 25px; }
.z-m { margin-left: 17px; width: 6px; height: 2px; background: #fff; flex: none; }
.slider { margin-left: 4px; width: 100px; height: 1px; background: #fff; position: relative; flex: none; }
.z-tick { position: absolute; left: 50px; top: -2px; width: 1px; height: 5px; background: #fff; }
.z-th { position: absolute; left: 33px; top: -6px; width: 4px; height: 13px; background: #fff; }
.z-p { margin-left: 4px; width: 8px; height: 8px; flex: none; background: linear-gradient(#fff,#fff) center/8px 2px no-repeat, linear-gradient(#fff,#fff) center/2px 8px no-repeat; }
.st-zoom { margin-left: 15px; width: 21px; white-space: nowrap; }
.si-fit { margin-left: 14px; }

/* taskbar */
.taskbar { height: 40px; flex: none; display: flex; align-items: stretch; padding-top: 1px; background: linear-gradient(to right, #bcbcbc 0, #bcbcbc 55px, #ededed 60px, #f6f6f6 600px, #f2f2f2 1100px, #bfbfbf 1150px, #bdbdbd 100%); }
.start { width: 59px; display: flex; align-items: center; padding-left: 7px; flex: none; }
.tk { margin-left: 3px; border: 1px solid #7f7f7f; border-radius: 3px 3px 0 0; border-bottom: 0; background: linear-gradient(to right, #fff, #f7f7f7); display: flex; align-items: center; justify-content: center; flex: none; }
.start + .tk { margin-left: 0; }
.tk.pressed { background: linear-gradient(to right, #e6e6e6, #d8d8d8); }
.w54 { width: 54px; } .w59 { width: 59px; } .w60 { width: 60px; }
.gap8 { margin-left: 8px; }
.tk-l { font: bold 13px "Liberation Sans", sans-serif; fill: #fff; }
.tray { position: absolute; left: 1157px; top: 729px; height: 39px; width: 209px; display: flex; align-items: center; color: #f2f2f2; }
.tr-en { width: 16px; font-size: 12px; line-height: 18px; margin-top: -6px; }
.tr-up { margin-left: 15px; }
.tr-sp { margin-left: 14px; }
.tr-bat { margin-left: 12px; }
.tr-db { margin-left: 10px; }
.clock { width: 52px; margin-left: 16px; display: flex; flex-direction: column; align-items: center; line-height: 16px; white-space: nowrap; font-size: 12px; color: #f6f6f6; }
.desk { position: absolute; right: 1px; top: 1px; width: 13px; height: 37px; border: 1px solid #a8a8a8; background: linear-gradient(to right, #d0d0d0, #bbb); }
```
